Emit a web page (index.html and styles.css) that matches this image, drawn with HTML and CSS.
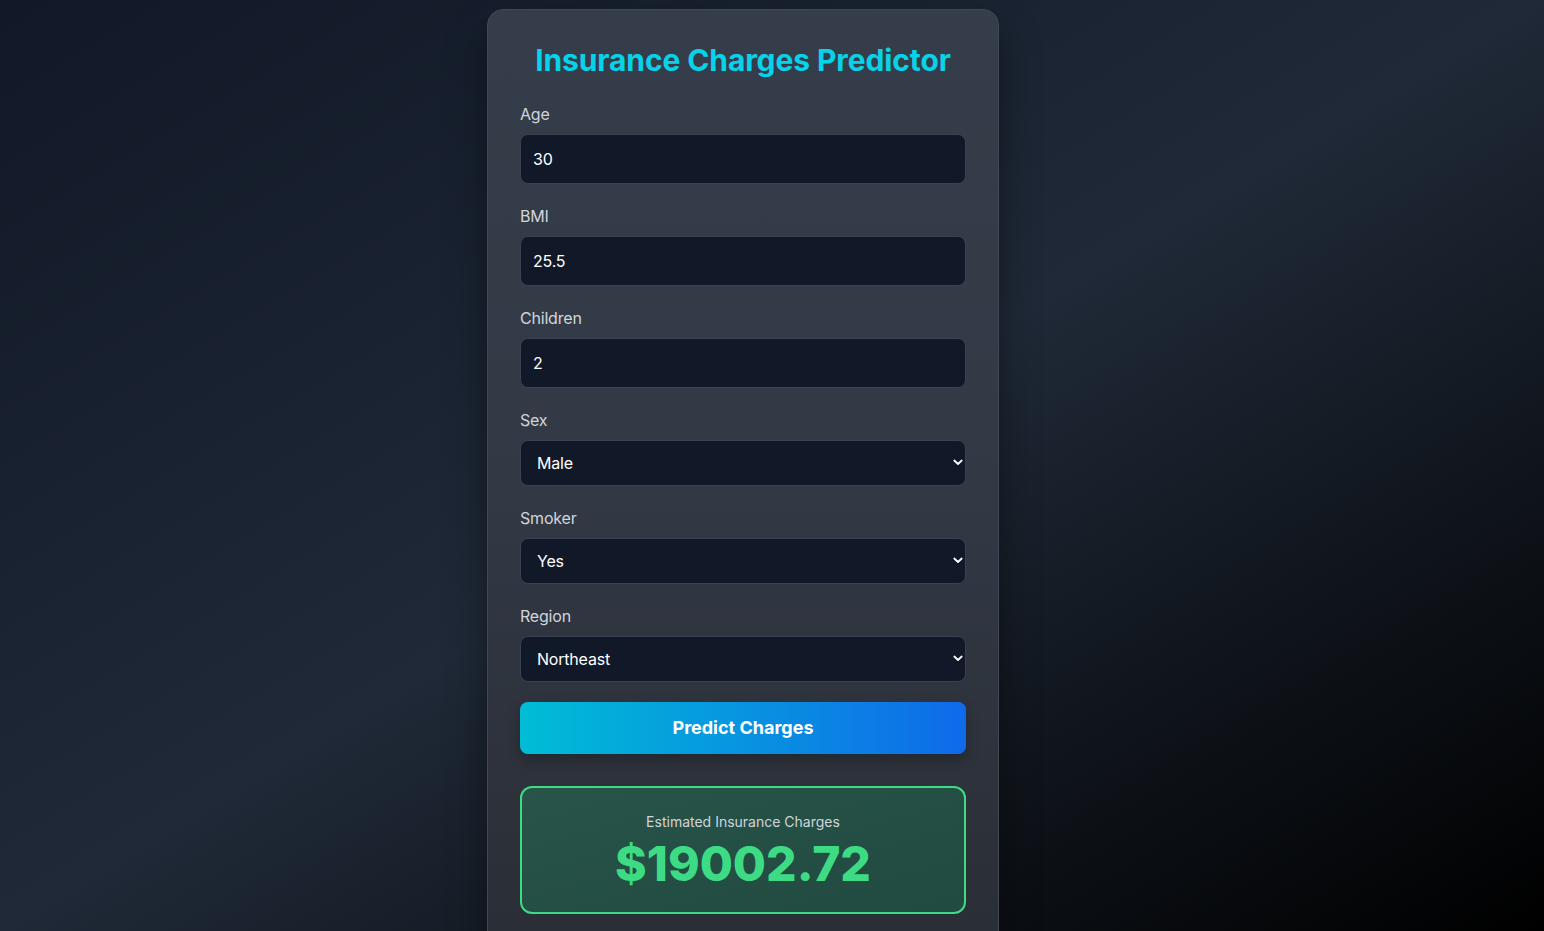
FILE: index.html
```html
<!DOCTYPE html>
<html lang="en">
<head>
<meta charset="utf-8">
<title>Insurance Charges Predictor</title>
<link rel="stylesheet" href="styles.css">
</head>
<body>
<div class="page">
  <div class="card">
    <h1 class="title">Insurance Charges Predictor</h1>
    <form class="form">
      <div class="field">
        <label class="label">Age</label>
        <input class="input" type="text" value="30">
      </div>
      <div class="field">
        <label class="label">BMI</label>
        <input class="input" type="text" value="25.5">
      </div>
      <div class="field">
        <label class="label">Children</label>
        <input class="input" type="text" value="2">
      </div>
      <div class="field">
        <label class="label">Sex</label>
        <div class="select-wrap">
          <select class="select"><option>Male</option><option>Female</option></select>
          <svg class="chev" width="10" height="7" viewBox="0 0 10 7"><path d="M1.3 1.5 L5 5 L8.7 1.5" fill="none" stroke="#fff" stroke-width="1.8" stroke-linecap="round" stroke-linejoin="round"/></svg>
        </div>
      </div>
      <div class="field">
        <label class="label">Smoker</label>
        <div class="select-wrap">
          <select class="select"><option>Yes</option><option>No</option></select>
          <svg class="chev" width="10" height="7" viewBox="0 0 10 7"><path d="M1.3 1.5 L5 5 L8.7 1.5" fill="none" stroke="#fff" stroke-width="1.8" stroke-linecap="round" stroke-linejoin="round"/></svg>
        </div>
      </div>
      <div class="field">
        <label class="label">Region</label>
        <div class="select-wrap">
          <select class="select"><option>Northeast</option><option>Northwest</option><option>Southeast</option><option>Southwest</option></select>
          <svg class="chev" width="10" height="7" viewBox="0 0 10 7"><path d="M1.3 1.5 L5 5 L8.7 1.5" fill="none" stroke="#fff" stroke-width="1.8" stroke-linecap="round" stroke-linejoin="round"/></svg>
        </div>
      </div>
      <button class="btn" type="button">Predict Charges</button>
    </form>
    <div class="result">
      <div class="result-label">Estimated Insurance Charges</div>
      <div class="result-value">$19002.72</div>
    </div>
  </div>
</div>
</body>
</html>
```

FILE: styles.css
```css
* { box-sizing: border-box; }
html, body { margin: 0; padding: 0; }
body {
  font-family: Inter, "Noto Sans", sans-serif;
  min-height: 100vh;
  background: linear-gradient(to bottom right, #111827, #1f2937, #000000);
  background-attachment: fixed;
  color: #fff;
  overflow: hidden;
}
.page {
  display: flex;
  justify-content: center;
  padding: 9px 58px 40px 0;
}
.card {
  width: 512px;
  padding: 32px;
  border: 1px solid #404856;
  border-radius: 16px;
  background: linear-gradient(to bottom, #353d4a 0%, #333a46 45%, #2a2e36 100%);
  box-shadow: 0 20px 40px rgba(0,0,0,0.4);
}
.title {
  margin: 0 0 24px;
  text-align: center;
  font-size: 30px;
  line-height: 36px;
  font-weight: 700;
  color: #06d3ea;
  letter-spacing: -0.1px;
}
.form { display: flex; flex-direction: column; gap: 20px; }
.field { display: flex; flex-direction: column; }
.label {
  font-size: 16px;
  line-height: 24px;
  color: #d1d5db;
  margin-bottom: 8px;
  letter-spacing: -0.2px;
}
.input, .select {
  width: 100%;
  background: #111827;
  border: 1px solid #3a4251;
  border-radius: 8px;
  color: #fff;
  font-family: inherit;
  font-size: 16px;
  line-height: 24px;
  outline: none;
  letter-spacing: -0.2px;
}
.input { height: 50px; padding: 12px 12px; }
.select-wrap { position: relative; }
.select {
  height: 46px;
  padding: 10px 16px;
  appearance: none;
  -webkit-appearance: none;
}
.chev { position: absolute; right: 3px; top: 19px; }
.btn {
  height: 52px;
  border: none;
  border-radius: 8px;
  background: linear-gradient(to right, #00bdd6, #0f6aea);
  color: #fff;
  font-family: inherit;
  font-size: 18px;
  line-height: 28px;
  font-weight: 700;
  box-shadow: 0 6px 14px rgba(0,0,0,0.25);
}
.result {
  margin-top: 32px;
  border: 2px solid #3ddc84;
  border-radius: 12px;
  background: linear-gradient(to bottom right, #28544a, #214a40);
  padding: 24px;
  text-align: center;
}
.result-label {
  font-size: 14px;
  line-height: 20px;
  color: #d1d5db;
}
.result-value {
  margin-top: 8px;
  font-size: 48px;
  line-height: 48px;
  font-weight: 800;
  color: #3ddc84;
}
```
